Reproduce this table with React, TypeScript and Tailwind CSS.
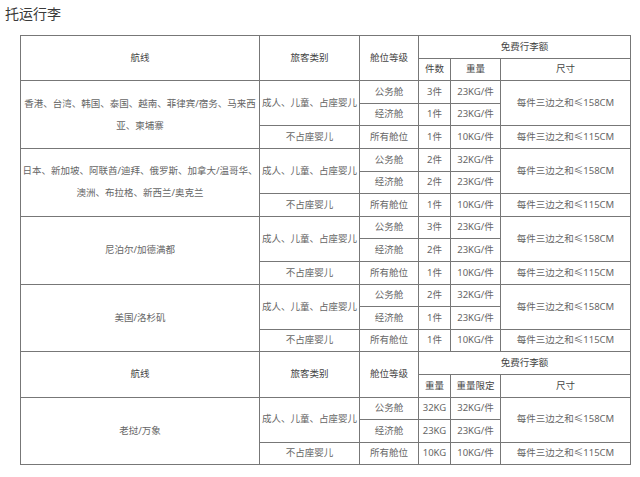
import React from 'react';

type Group = {
  route: string[];
  biz: [string, string];
  eco: [string, string];
  infant: [string, string];
};

const groupsA: Group[] = [
  {
    route: ['香港、台湾、韩国、泰国、越南、菲律宾/宿务、马来西', '亚、柬埔寨'],
    biz: ['3件', '23KG/件'],
    eco: ['1件', '23KG/件'],
    infant: ['1件', '10KG/件'],
  },
  {
    route: ['日本、新加坡、阿联酋/迪拜、俄罗斯、加拿大/温哥华、', '澳洲、布拉格、新西兰/奥克兰'],
    biz: ['2件', '32KG/件'],
    eco: ['2件', '23KG/件'],
    infant: ['1件', '10KG/件'],
  },
  {
    route: ['尼泊尔/加德满都'],
    biz: ['3件', '23KG/件'],
    eco: ['2件', '23KG/件'],
    infant: ['1件', '10KG/件'],
  },
  {
    route: ['美国/洛杉矶'],
    biz: ['2件', '32KG/件'],
    eco: ['1件', '23KG/件'],
    infant: ['1件', '10KG/件'],
  },
];

const groupB: Group = {
  route: ['老挝/万象'],
  biz: ['32KG', '32KG/件'],
  eco: ['23KG', '23KG/件'],
  infant: ['10KG', '10KG/件'],
};

function Cell({ children, className = '' }: { children: React.ReactNode; className?: string }) {
  return (
    <div className={`bg-white flex items-center justify-center text-center whitespace-nowrap ${className}`}>
      {children}
    </div>
  );
}

function Head({ sub }: { sub: [string, string] }) {
  return (
    <>
      <Cell className="row-span-2 text-[#444]">航线</Cell>
      <Cell className="row-span-2 text-[#444]">旅客类别</Cell>
      <Cell className="row-span-2 text-[#444]">舱位等级</Cell>
      <Cell className="col-span-3 text-[#444]">免费行李额</Cell>
      <Cell className="text-[#444]">{sub[0]}</Cell>
      <Cell className="text-[#444]">{sub[1]}</Cell>
      <Cell className="text-[#444]">尺寸</Cell>
    </>
  );
}

function GroupRows({ g }: { g: Group }) {
  return (
    <>
      <Cell className="row-span-3 flex-col leading-[22px]">
        {g.route.map((line) => (
          <span key={line}>{line}</span>
        ))}
      </Cell>
      <Cell className="row-span-2">成人、儿童、占座婴儿</Cell>
      <Cell>公务舱</Cell>
      <Cell>{g.biz[0]}</Cell>
      <Cell>{g.biz[1]}</Cell>
      <Cell className="row-span-2">每件三边之和≤158CM</Cell>
      <Cell>经济舱</Cell>
      <Cell>{g.eco[0]}</Cell>
      <Cell>{g.eco[1]}</Cell>
      <Cell>不占座婴儿</Cell>
      <Cell>所有舱位</Cell>
      <Cell>{g.infant[0]}</Cell>
      <Cell>{g.infant[1]}</Cell>
      <Cell>每件三边之和≤115CM</Cell>
    </>
  );
}

export default function App() {
  return (
    <div
      className="w-[640px] h-[477px] bg-white overflow-hidden"
      style={{ fontFamily: '"Noto Sans", "Noto Sans CJK SC", sans-serif' }}
    >
      <h1 className="pl-[5px] text-[14px] leading-[28px] text-[#3a3a3a] font-normal">托运行李</h1>

      <div className="mt-[7px] ml-[20px] w-[611px] grid grid-cols-[238px_99px_58px_31px_49px_129px] grid-rows-[repeat(19,21.6px)] gap-px p-px bg-[#777] text-[9.5px] text-[#666]">
        <Head sub={['件数', '重量']} />
        {groupsA.map((g) => (
          <GroupRows key={g.route[0]} g={g} />
        ))}
        <Head sub={['重量', '重量限定']} />
        <GroupRows g={groupB} />
      </div>
    </div>
  );
}
